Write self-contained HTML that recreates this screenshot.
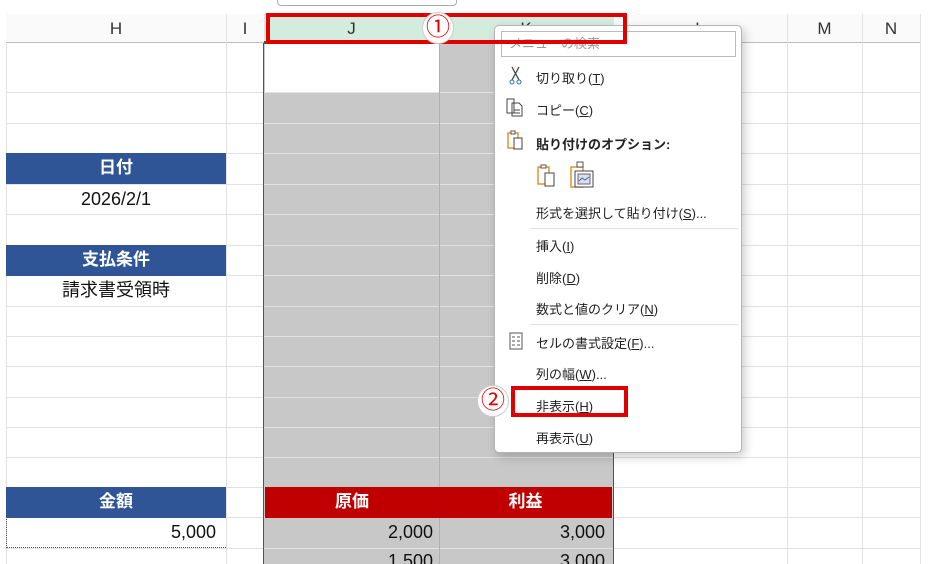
<!DOCTYPE html>
<html><head><meta charset="utf-8"><style>
*{margin:0;padding:0;box-sizing:border-box}
html,body{width:929px;height:564px;overflow:hidden}
body{background:#fff;position:relative;font-family:"Liberation Sans","Noto Sans CJK JP",sans-serif}
.a{position:absolute}
.hl{position:absolute;height:1px;background:#e2e2e2;left:6px;width:914px}
.vl{position:absolute;width:1px;background:#e2e2e2;top:14px;height:550px}
.ch{position:absolute;top:14px;height:29px;line-height:29px;text-align:center;font-size:17px;color:#333}
.lab{position:absolute;color:#fff;font-weight:bold;font-size:17px;text-align:center;line-height:30px;height:31px}
.mi{position:absolute;left:536px;font-size:13px;color:#222}
.sep{position:absolute;left:530px;width:208px;height:1px;background:#e0e0e0}
.num{position:absolute;text-align:right;font-size:18px;line-height:30px;color:#111}
</style></head><body>
<div class="a" style="left:277px;top:-6px;width:180px;height:12px;border:1px solid #aaa;border-radius:4px;background:#fff"></div>
<div class="a" style="left:6px;top:14px;width:914px;height:29px;background:#fafafa;border-bottom:1px solid #bdbdbd"></div>
<div class="a" style="left:264px;top:14px;width:349px;height:29px;background:#d3ecdd;border-bottom:2px solid #1e7145"></div>
<div class="ch" style="left:6px;width:220px">H</div>
<div class="ch" style="left:226px;width:38px">I</div>
<div class="ch" style="left:264px;width:175px">J</div>
<div class="ch" style="left:439px;width:174px">K</div>
<div class="ch" style="left:613px;width:174px">L</div>
<div class="ch" style="left:787px;width:75px">M</div>
<div class="ch" style="left:862px;width:58px">N</div>
<div class="a" style="left:264px;top:44px;width:349px;height:520px;background:#c8c8c8"></div>
<div class="a" style="left:265px;top:44px;width:174px;height:48px;background:#fff"></div>
<div class="hl" style="top:92px"></div><div class="hl" style="top:123px"></div><div class="hl" style="top:153px"></div><div class="hl" style="top:184px"></div><div class="hl" style="top:214px"></div><div class="hl" style="top:245px"></div><div class="hl" style="top:275px"></div><div class="hl" style="top:306px"></div><div class="hl" style="top:336px"></div><div class="hl" style="top:366px"></div><div class="hl" style="top:397px"></div><div class="hl" style="top:427px"></div><div class="hl" style="top:457px"></div><div class="hl" style="top:487px"></div><div class="hl" style="top:517px"></div><div class="hl" style="top:548px"></div>
<div class="vl" style="left:6px;top:44px;height:520px"></div>
<div class="vl" style="left:226px"></div><div class="vl" style="left:439px;background:#b0b0b0;top:44px;height:520px"></div><div class="vl" style="left:787px"></div><div class="vl" style="left:862px"></div><div class="vl" style="left:920px"></div>
<div class="vl" style="left:613px;top:14px;height:30px"></div>
<div class="a" style="left:263px;top:43px;width:351px;height:521px;border:1px solid #1e7145;border-bottom:none"></div>
<div class="lab" style="left:6px;top:153px;width:220px;background:#2f5597">日付</div>
<div class="a" style="left:6px;top:184px;width:220px;text-align:center;font-size:18px;line-height:30px;color:#111">2026/2/1</div>
<div class="lab" style="left:6px;top:245px;width:220px;background:#2f5597">支払条件</div>
<div class="a" style="left:6px;top:275px;width:220px;text-align:center;font-size:18px;line-height:30px;color:#111">請求書受領時</div>
<div class="lab" style="left:6px;top:487px;width:220px;background:#2f5597">金額</div>
<div class="num" style="left:6px;top:517px;width:210px">5,000</div>
<div class="a" style="left:6px;top:517px;width:220px;height:31px;border-left:1px dotted #555;border-bottom:1px dotted #555;border-top:1px dotted #555"></div>
<div class="lab" style="left:265px;top:487px;width:174px;background:#c00000">原価</div>
<div class="lab" style="left:439px;top:487px;width:173px;background:#c00000">利益</div>
<div class="num" style="left:265px;top:517px;width:168px">2,000</div>
<div class="num" style="left:439px;top:517px;width:166px">3,000</div>
<div class="num" style="left:265px;top:546px;width:168px">1,500</div>
<div class="num" style="left:439px;top:546px;width:166px">3,000</div>
<div class="a" style="left:494px;top:25px;width:248px;height:428px;background:#fff;border:1px solid #b5b5b5;border-radius:5px;box-shadow:3px 4px 10px rgba(0,0,0,.2)"></div>
<div class="a" style="left:501px;top:31px;width:235px;height:26px;border:1px solid #bbb;font-size:13px;color:#999;line-height:24px;padding-left:7px">メニューの検索</div>
<svg class="a" style="left:508px;top:66px" width="16" height="20"><path d="M4 1 L11 14 M11 1 L4 14" stroke="#444" stroke-width="1.3" fill="none"/><circle cx="4" cy="16" r="2" stroke="#2a6ebb" fill="none"/><circle cx="11" cy="16" r="2" stroke="#2a6ebb" fill="none"/></svg>
<div class="mi" style="top:68px">切り取り(<u>T</u>)</div>
<svg class="a" style="left:506px;top:98px" width="18" height="20"><path d="M1 1h7v14H1z M6 5h7l3 3v10H6z M8 12h6 M8 15h6" stroke="#444" fill="#fff"/></svg>
<div class="mi" style="top:100px">コピー(<u>C</u>)</div>
<svg class="a" style="left:507px;top:129px" width="18" height="22"><path d="M1 4h10v15H1z" stroke="#e8902e" stroke-width="1.5" fill="#fff"/><path d="M4 2h4v3H4z" stroke="#555" fill="#fff"/><path d="M7 9h8v11H7z" stroke="#444" fill="#fff"/></svg>
<div class="mi" style="top:134px;font-weight:bold">貼り付けのオプション:</div>
<svg class="a" style="left:537px;top:163px" width="20" height="24"><path d="M1 4h11v17H1z" stroke="#e8902e" stroke-width="1.5" fill="#fff"/><path d="M4 2h5v3H4z" stroke="#555" fill="#fff"/><path d="M8 10h9v13H8z" stroke="#444" fill="#fff"/></svg>
<svg class="a" style="left:570px;top:161px" width="26" height="28"><path d="M1 6h12v20H1z" stroke="#e8902e" stroke-width="1.5" fill="#fff"/><path d="M7 1h6v5H7z" stroke="#555" fill="#fff"/><path d="M5 10h18v16H5z" stroke="#444" fill="#fff"/><path d="M8 13h12v10H8z" stroke="#666" fill="#dde"/><path d="M9 20l3-3 3 2 4-3" stroke="#2a6ebb" fill="none"/></svg>
<div class="mi" style="top:203px">形式を選択して貼り付け(<u>S</u>)...</div>
<div class="sep" style="top:228px"></div>
<div class="mi" style="top:236px">挿入(<u>I</u>)</div>
<div class="mi" style="top:268px">削除(<u>D</u>)</div>
<div class="mi" style="top:299px">数式と値のクリア(<u>N</u>)</div>
<div class="sep" style="top:324px"></div>
<svg class="a" style="left:509px;top:332px" width="14" height="18"><path d="M1 1h12v16H1z" stroke="#555" fill="#fff"/><path d="M3 5h3 M8 5h3 M3 9h3 M8 9h3 M3 13h3 M8 13h3" stroke="#555"/></svg>
<div class="mi" style="top:333px">セルの書式設定(<u>F</u>)...</div>
<div class="mi" style="top:364px">列の幅(<u>W</u>)...</div>
<div class="mi" style="top:396px">非表示(<u>H</u>)</div>
<div class="mi" style="top:428px">再表示(<u>U</u>)</div>
<div class="a" style="left:266px;top:13px;width:361px;height:31px;border:4px solid #e00000"></div>
<div class="a" style="left:511px;top:386px;width:117px;height:31px;border:4px solid #e00000"></div>
<div class="a" style="left:422px;top:12px;width:32px;height:32px;border-radius:50%;background:#fff;border:1px solid #ccc;color:#e00000;font-size:24px;text-align:center;line-height:30px">①</div>
<div class="a" style="left:477px;top:385px;width:32px;height:32px;border-radius:50%;background:#fff;border:1px solid #ccc;color:#e00000;font-size:24px;text-align:center;line-height:30px">②</div>
</body></html>
